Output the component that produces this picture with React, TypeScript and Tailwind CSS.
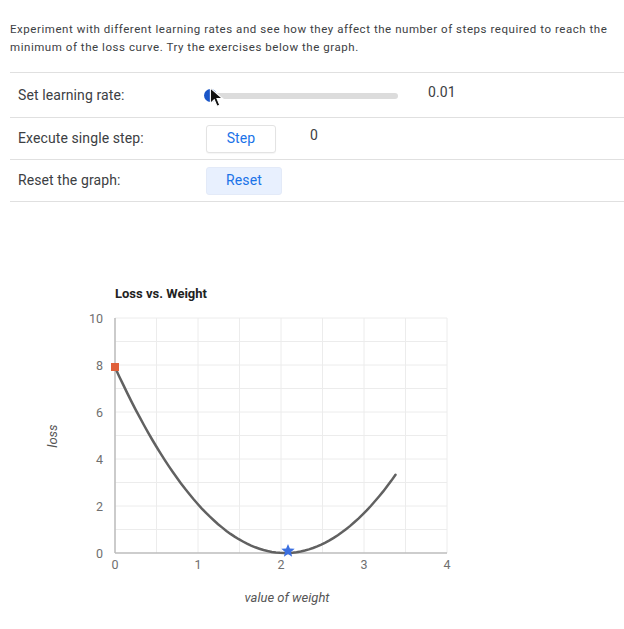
import React from 'react';

// chart geometry, in page pixels
const X0 = 115;
const X1 = 447;
const Y0 = 552;
const Y1 = 317;
const sx = (w: number) => X0 + ((X1 - X0) * w) / 4;
const sy = (l: number) => Y0 - ((Y0 - Y1) * l) / 10;

const loss = (w: number) => 1.88 * (w - 2.05) * (w - 2.05);

function curvePath() {
  const pts: string[] = [];
  for (let i = 0; i <= 68; i++) {
    const w = (3.38 * i) / 68;
    pts.push(`${i === 0 ? 'M' : 'L'}${sx(w).toFixed(1)},${sy(loss(w)).toFixed(1)}`);
  }
  return pts.join(' ');
}

function star(cx: number, cy: number, r: number) {
  const pts: string[] = [];
  for (let i = 0; i < 10; i++) {
    const rr = i % 2 === 0 ? r : r * 0.45;
    const a = -Math.PI / 2 + (i * Math.PI) / 5;
    pts.push(`${(cx + rr * Math.cos(a)).toFixed(1)},${(cy + rr * Math.sin(a)).toFixed(1)}`);
  }
  return pts.join(' ');
}

function LossChart() {
  const vLines = [0, 0.5, 1, 1.5, 2, 2.5, 3, 3.5, 4];
  const hLines = [1, 2, 3, 4, 5, 6, 7, 8, 9, 10];
  return (
    <svg width={624} height={428} className="block">
      <g transform="translate(0,-201)" fontFamily="Roboto, sans-serif">
        <text x={115} y={297} fontSize={13} fontWeight={700} fill="#222">
          Loss vs. Weight
        </text>
        {vLines.map((w) => (
          <line key={`v${w}`} x1={sx(w)} x2={sx(w)} y1={Y1} y2={Y0} stroke="#ececec" strokeWidth={1} />
        ))}
        {hLines.map((l) => (
          <line key={`h${l}`} x1={X0} x2={X1} y1={sy(l)} y2={sy(l)} stroke="#ececec" strokeWidth={1} />
        ))}
        <line x1={X0} x2={X0} y1={Y1} y2={Y0} stroke="#bdbdbd" strokeWidth={1.5} />
        <line x1={X0} x2={X1} y1={Y0} y2={Y0} stroke="#bdbdbd" strokeWidth={1.5} />
        {[0, 2, 4, 6, 8, 10].map((l) => (
          <text key={`yl${l}`} x={103} y={sy(l) + 4.5} fontSize={12.5} fill="#6f6f6f" textAnchor="end">
            {l}
          </text>
        ))}
        {[0, 1, 2, 3, 4].map((w) => (
          <text key={`xl${w}`} x={sx(w)} y={568} fontSize={12.5} fill="#6f6f6f" textAnchor="middle">
            {w}
          </text>
        ))}
        <path d={curvePath()} fill="none" stroke="#616161" strokeWidth={2.5} strokeLinecap="round" />
        <rect x={111} y={362} width={8} height={8} fill="#e0603a" />
        <polygon points={star(288, 550, 7)} fill="#3b6fe0" />
        <text
          transform="translate(57,435) rotate(-90)"
          fontSize={13}
          fontStyle="italic"
          fill="#555"
          textAnchor="middle"
        >
          loss
        </text>
        <text x={287} y={601} fontSize={13} fontStyle="italic" fill="#555" textAnchor="middle">
          value of weight
        </text>
      </g>
    </svg>
  );
}

export default function App() {
  return (
    <div className="w-[624px] h-[629px] bg-white overflow-hidden font-['Roboto',sans-serif] text-[#3c4043]">
      <div className="pl-[10px]">
        <p className="pt-[20px] pr-[4px] text-[11.5px] leading-[18px] text-[#3c4043] tracking-[0.55px]">
          Experiment with different learning rates and see how they affect the number of steps required to reach the
          minimum of the loss curve. Try the exercises below the graph.
        </p>

        <div className="mt-[16px] border-t border-[#e0e0e0] text-[14px] tracking-[0.1px] text-[#3c4043]">
          {/* learning rate slider */}
          <div className="h-[45px] flex items-center border-b border-[#e0e0e0]">
            <span className="w-[196px] pl-[8px]">Set learning rate:</span>
            <div className="relative w-[192px] h-[6px] mt-[1px] rounded-full bg-[#dcdcdc]">
              <div className="absolute left-[-2px] top-[-4px] w-[13px] h-[13px] rounded-full bg-[#1a56c8]" />
              <svg className="absolute left-[3px] top-[-6px]" width={16} height={22} viewBox="0 0 14 20">
                <path d="M1 1 L1 15 L4.5 11.5 L7 17.5 L9.5 16.5 L7 10.5 L12 10.5 Z" fill="#111" stroke="#fff" strokeWidth={1} />
              </svg>
            </div>
            <span className="ml-[30px] -mt-[6px]">0.01</span>
          </div>

          {/* single step */}
          <div className="h-[42px] flex items-center border-b border-[#e0e0e0]">
            <span className="w-[196px] pl-[8px]">Execute single step:</span>
            <button className="w-[70px] h-[28px] rounded-[3px] border border-[#e3e3e3] bg-white text-[#1a73e8] text-[14px] shadow-[0_1px_1px_rgba(0,0,0,0.04)]">
              Step
            </button>
            <span className="ml-[34px] -mt-[6px]">0</span>
          </div>

          {/* reset */}
          <div className="h-[42px] flex items-center border-b border-[#e0e0e0]">
            <span className="w-[196px] pl-[8px]">Reset the graph:</span>
            <button className="w-[76px] h-[28px] rounded-[3px] border border-[#e3eaf8] bg-[#e8f0fe] text-[#1a73e8] text-[14px]">
              Reset
            </button>
          </div>
        </div>
      </div>

      <LossChart />
    </div>
  );
}
